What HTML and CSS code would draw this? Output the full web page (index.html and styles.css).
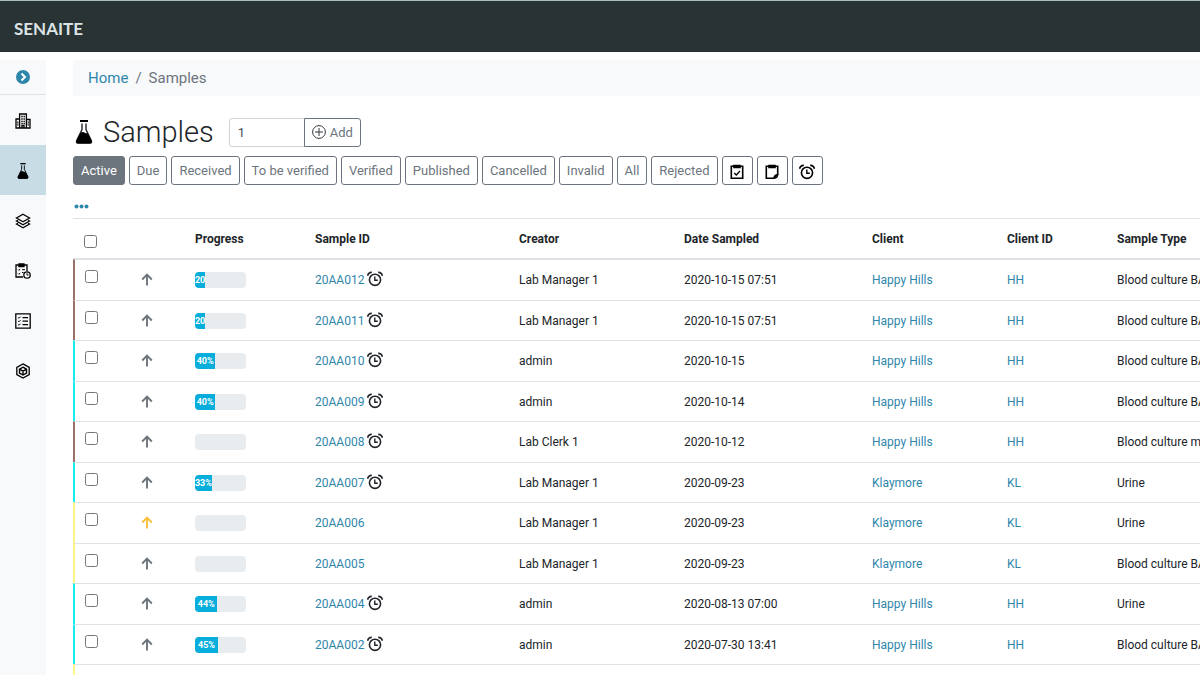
FILE: index.html
```html
<!DOCTYPE html>
<html lang="en">
<head>
    <meta charset="UTF-8">
    <meta name="viewport" content="width=device-width, initial-scale=1.0">
    <title>Samples - SENAITE</title>
    <link rel="stylesheet" href="styles.css">
</head>
<body>
    <svg class="sprite" aria-hidden="true">
        <symbol id="alarm" viewBox="0 0 16 16">
            <circle cx="8" cy="8.800" r="5.600" fill="none" stroke="currentColor" stroke-width="1.600"/>
            <path d="M7.800 5.600v3.600h3" fill="none" stroke="currentColor" stroke-width="1.400"/>
            <path d="M.8 4.800C.8 2.800 2.400 1.200 4.800 1.300M15.200 4.800C15.200 2.800 13.600 1.200 11.200 1.300" fill="none" stroke="currentColor" stroke-width="1.700"/>
        </symbol>
        <symbol id="flask" viewBox="0 0 18 24">
            <path d="M5 0h8v2H5z"/>
            <path d="M7 3.500V9.500L1.700 20.500Q.8 23 3 23h12q2.200 0 1.300-2.500L11 9.500V3.500" fill="none" stroke="currentColor" stroke-width="1.400"/>
            <path d="M5.300 13q2.700-1.600 4.200-.4t3 .4L17 21.500q0 2-2 2H3q-2 0-2-2z"/>
        </symbol>
        <symbol id="arrow" viewBox="0 0 12 13">
            <path d="M6 12.500V1.700M1.200 6.500L6 1.700l4.800 4.800" fill="none" stroke="currentColor" stroke-width="1.900"/>
        </symbol>
    </svg>

    <header class="navbar">
        <a class="brand" href="#">SENAITE</a>
    </header>

    <div class="layout">
        <nav class="sidebar">
            <button class="toggle" aria-label="Expand sidebar">
                <svg width="14" height="14" viewBox="0 0 14 14"><circle cx="7" cy="7" r="7" fill="#2f86ab"/><path d="M5.500 3.500L9 7l-3.500 3.500" fill="none" stroke="#fff" stroke-width="2"/></svg>
            </button>
            <a class="side-item" href="#" aria-label="Clients">
                <svg width="16" height="16" viewBox="0 0 16 16" fill="none" stroke="currentColor" stroke-width="1.300">
                    <path d="M4.600 15V1h6.800v14M4.600 6H1v9h14V6.500h-3.600M7 15v-2.500h2V15"/>
                    <path d="M6.300 3.500h3.600M6.300 6h3.600M6.300 8.500h3.600M6.300 10.700h3.600" stroke-dasharray="1.400 .8"/>
                    <path d="M2.800 8.500v4.500M13.200 8.500v4.500" stroke-dasharray="1.200 .8"/>
                </svg>
            </a>
            <a class="side-item active" href="#" aria-label="Samples"><svg width="12" height="16"><use href="#flask"/></svg></a>
            <a class="side-item" href="#" aria-label="Batches">
                <svg width="16" height="16" viewBox="0 0 16 16" fill="none" stroke="currentColor" stroke-width="1.300">
                    <path d="M8 1.300L14.500 5 8 8.700 1.500 5z"/>
                    <path d="M3 7.200L1.500 8 8 11.700 14.500 8 13 7.200M3 10.200l-1.500.8L8 14.700l6.500-3.700-1.500-.8"/>
                </svg>
            </a>
            <a class="side-item" href="#" aria-label="Worksheets">
                <svg width="16" height="16" viewBox="0 0 16 16" fill="none" stroke="currentColor" stroke-width="1.300">
                    <path d="M8 14H1V2h11v6"/>
                    <path d="M4 1h5v2.500H4z" fill="currentColor"/>
                    <path d="M3 6.500l.8.800L5.200 6M3 10.500l.8.800L5.200 10M7 6.700h3M7 9.500h1.500" stroke-width="1"/>
                    <circle cx="12" cy="12" r="3.200"/>
                    <path d="M12 10.300V12h1.500" stroke-width="1"/>
                </svg>
            </a>
            <a class="side-item" href="#" aria-label="Methods">
                <svg width="16" height="16" viewBox="0 0 16 16" fill="none" stroke="currentColor" stroke-width="1.300">
                    <path d="M.8.800h14.400v14.400H.8z"/>
                    <path d="M3.200 4.500l.8.800L5.500 3.700M3.200 8l.8.800 1.500-1.600M3.200 11.500l.8.800 1.500-1.600" stroke-width="1"/>
                    <path d="M7.500 4.700H13M7.500 8.200H13M7.500 11.700H13" stroke-width="1.200"/>
                </svg>
            </a>
            <a class="side-item" href="#" aria-label="Storage">
                <svg width="16" height="16" viewBox="0 0 16 16" fill="none" stroke="currentColor" stroke-width="1.300">
                    <path d="M8 .9l6.200 3.500v7.200L8 15.100l-6.200-3.500V4.400z"/>
                    <path d="M8 4.200l3.500 2v3.900L8 12l-3.500-1.900V6.200zM4.500 6.200L8 8.200l3.500-2M8 8.200V12" stroke-width="1.400"/>
                </svg>
            </a>
        </nav>

        <main class="content">
            <ol class="breadcrumb">
                <li><a href="#">Home</a></li>
                <li>Samples</li>
            </ol>

            <div class="heading">
                <svg class="heading-icon" width="18" height="24"><use href="#flask"/></svg>
                <h1>Samples</h1>
                <form class="add-form">
                    <input type="text" value="1" aria-label="Number of samples">
                    <button class="btn" type="button">
                        <svg width="14" height="14" viewBox="0 0 14 14" fill="none" stroke="#343a40"><circle cx="7" cy="7" r="6.400"/><path d="M7 3v8M3 7h8"/></svg>
                        Add
                    </button>
                </form>
            </div>

            <div class="filters">
                <button class="btn active">Active</button>
                <button class="btn">Due</button>
                <button class="btn">Received</button>
                <button class="btn">To be verified</button>
                <button class="btn">Verified</button>
                <button class="btn">Published</button>
                <button class="btn">Cancelled</button>
                <button class="btn">Invalid</button>
                <button class="btn">All</button>
                <button class="btn">Rejected</button>
                <button class="btn icon-btn" aria-label="Assigned">
                    <svg width="14" height="16" viewBox="0 0 14 16" fill="none" stroke="currentColor" stroke-width="1.600"><path d="M1.300 2.300h11.400v12H1.300z"/><path d="M4 1.500h6v2H4z" fill="currentColor"/><path d="M4.300 9l2 2 3.700-4" stroke-width="1.300"/></svg>
                </button>
                <button class="btn icon-btn" aria-label="Unassigned">
                    <svg width="14" height="16" viewBox="0 0 14 16" fill="none" stroke="currentColor" stroke-width="1.600"><path d="M8.500 14.300H1.300v-12h11.400v8z"/><path d="M4 1.500h6v2H4z" fill="currentColor"/><path d="M12.700 10.800q-3.200 0-3.700 3.500 3.400-.3 3.700-3.500z" stroke-width="1.400"/></svg>
                </button>
                <button class="btn icon-btn" aria-label="Late"><svg width="16" height="16"><use href="#alarm"/></svg></button>
            </div>

            <button class="more" aria-label="Toggle columns">
                <svg width="15" height="5" viewBox="0 0 15 5" fill="currentColor"><circle cx="2.500" cy="2.500" r="2"/><circle cx="7.500" cy="2.500" r="2"/><circle cx="12.500" cy="2.500" r="2"/></svg>
            </button>

            <table class="listing">
                <colgroup>
                    <col class="col-check"><col class="col-priority"><col class="col-progress"><col class="col-id"><col class="col-creator"><col class="col-date"><col class="col-client"><col class="col-clientid"><col>
                </colgroup>
                <thead>
                    <tr>
                        <th><input type="checkbox" aria-label="Select all"></th>
                        <th></th>
                        <th>Progress</th>
                        <th>Sample ID</th>
                        <th>Creator</th>
                        <th>Date Sampled</th>
                        <th>Client</th>
                        <th>Client ID</th>
                        <th>Sample Type</th>
                    </tr>
                </thead>
                <tbody>
                    <tr class="received">
                        <td><input type="checkbox" aria-label="Select 20AA012"></td>
                        <td><svg class="priority"><use href="#arrow"/></svg></td>
                        <td><div class="progress"><div class="bar" style="width: 20%">20</div></div></td>
                        <td><a href="#">20AA012</a> <svg class="late"><use href="#alarm"/></svg></td>
                        <td>Lab Manager 1</td>
                        <td>2020-10-15 07:51</td>
                        <td><a href="#">Happy Hills</a></td>
                        <td><a href="#">HH</a></td>
                        <td>Blood culture BA</td>
                    </tr>
                    <tr class="received">
                        <td><input type="checkbox" aria-label="Select 20AA011"></td>
                        <td><svg class="priority"><use href="#arrow"/></svg></td>
                        <td><div class="progress"><div class="bar" style="width: 20%">20</div></div></td>
                        <td><a href="#">20AA011</a> <svg class="late"><use href="#alarm"/></svg></td>
                        <td>Lab Manager 1</td>
                        <td>2020-10-15 07:51</td>
                        <td><a href="#">Happy Hills</a></td>
                        <td><a href="#">HH</a></td>
                        <td>Blood culture BA</td>
                    </tr>
                    <tr class="verified">
                        <td><input type="checkbox" aria-label="Select 20AA010"></td>
                        <td><svg class="priority"><use href="#arrow"/></svg></td>
                        <td><div class="progress"><div class="bar" style="width: 40%">40%</div></div></td>
                        <td><a href="#">20AA010</a> <svg class="late"><use href="#alarm"/></svg></td>
                        <td>admin</td>
                        <td>2020-10-15</td>
                        <td><a href="#">Happy Hills</a></td>
                        <td><a href="#">HH</a></td>
                        <td>Blood culture BA</td>
                    </tr>
                    <tr class="verified">
                        <td><input type="checkbox" aria-label="Select 20AA009"></td>
                        <td><svg class="priority"><use href="#arrow"/></svg></td>
                        <td><div class="progress"><div class="bar" style="width: 40%">40%</div></div></td>
                        <td><a href="#">20AA009</a> <svg class="late"><use href="#alarm"/></svg></td>
                        <td>admin</td>
                        <td>2020-10-14</td>
                        <td><a href="#">Happy Hills</a></td>
                        <td><a href="#">HH</a></td>
                        <td>Blood culture BA</td>
                    </tr>
                    <tr class="received">
                        <td><input type="checkbox" aria-label="Select 20AA008"></td>
                        <td><svg class="priority"><use href="#arrow"/></svg></td>
                        <td><div class="progress"></div></td>
                        <td><a href="#">20AA008</a> <svg class="late"><use href="#alarm"/></svg></td>
                        <td>Lab Clerk 1</td>
                        <td>2020-10-12</td>
                        <td><a href="#">Happy Hills</a></td>
                        <td><a href="#">HH</a></td>
                        <td>Blood culture m</td>
                    </tr>
                    <tr class="verified">
                        <td><input type="checkbox" aria-label="Select 20AA007"></td>
                        <td><svg class="priority"><use href="#arrow"/></svg></td>
                        <td><div class="progress"><div class="bar" style="width: 33%">33%</div></div></td>
                        <td><a href="#">20AA007</a> <svg class="late"><use href="#alarm"/></svg></td>
                        <td>Lab Manager 1</td>
                        <td>2020-09-23</td>
                        <td><a href="#">Klaymore</a></td>
                        <td><a href="#">KL</a></td>
                        <td>Urine</td>
                    </tr>
                    <tr class="due">
                        <td><input type="checkbox" aria-label="Select 20AA006"></td>
                        <td><svg class="priority high"><use href="#arrow"/></svg></td>
                        <td><div class="progress"></div></td>
                        <td><a href="#">20AA006</a></td>
                        <td>Lab Manager 1</td>
                        <td>2020-09-23</td>
                        <td><a href="#">Klaymore</a></td>
                        <td><a href="#">KL</a></td>
                        <td>Urine</td>
                    </tr>
                    <tr class="due">
                        <td><input type="checkbox" aria-label="Select 20AA005"></td>
                        <td><svg class="priority"><use href="#arrow"/></svg></td>
                        <td><div class="progress"></div></td>
                        <td><a href="#">20AA005</a></td>
                        <td>Lab Manager 1</td>
                        <td>2020-09-23</td>
                        <td><a href="#">Klaymore</a></td>
                        <td><a href="#">KL</a></td>
                        <td>Blood culture BA</td>
                    </tr>
                    <tr class="verified">
                        <td><input type="checkbox" aria-label="Select 20AA004"></td>
                        <td><svg class="priority"><use href="#arrow"/></svg></td>
                        <td><div class="progress"><div class="bar" style="width: 44%">44%</div></div></td>
                        <td><a href="#">20AA004</a> <svg class="late"><use href="#alarm"/></svg></td>
                        <td>admin</td>
                        <td>2020-08-13 07:00</td>
                        <td><a href="#">Happy Hills</a></td>
                        <td><a href="#">HH</a></td>
                        <td>Urine</td>
                    </tr>
                    <tr class="verified">
                        <td><input type="checkbox" aria-label="Select 20AA002"></td>
                        <td><svg class="priority"><use href="#arrow"/></svg></td>
                        <td><div class="progress"><div class="bar" style="width: 45%">45%</div></div></td>
                        <td><a href="#">20AA002</a> <svg class="late"><use href="#alarm"/></svg></td>
                        <td>admin</td>
                        <td>2020-07-30 13:41</td>
                        <td><a href="#">Happy Hills</a></td>
                        <td><a href="#">HH</a></td>
                        <td>Blood culture BA</td>
                    </tr>
                    <tr class="due">
                        <td colspan="9"></td>
                    </tr>
                </tbody>
            </table>
        </main>
    </div>
</body>
</html>
```
FILE: styles.css
```css
* {
    box-sizing: border-box;
}
body {
    display: flex;
    flex-direction: column;
    height: 100vh;
    margin: 0;
    overflow: hidden;
    font-family: Roboto, sans-serif;
    font-size: 12px;
    line-height: 20px;
    color: #212529;
    background-color: #fff;
}
a {
    color: #2f86ab;
    text-decoration: none;
}
button {
    font-family: inherit;
    cursor: pointer;
}
.sprite {
    position: absolute;
    width: 0;
    height: 0;
}
.navbar {
    display: flex;
    align-items: center;
    flex-shrink: 0;
    height: 52px;
    padding: 5px 14px 0;
    background-color: #293333;
    border-top: 1px solid #a9bcbc;
}
.brand {
    font-family: Lato, sans-serif;
    font-size: 17px;
    font-weight: bold;
    color: #dce3e6;
}
.layout {
    display: flex;
    flex: 1;
    min-height: 0;
    padding-top: 8px;
}
.sidebar {
    flex: 0 0 46px;
    background-color: #f8f9fb;
}
.toggle {
    display: flex;
    align-items: center;
    justify-content: center;
    width: 100%;
    height: 35px;
    padding: 0;
    background: none;
    border: none;
    border-bottom: 1px solid #dee2e6;
}
.side-item {
    display: flex;
    align-items: center;
    justify-content: center;
    height: 50px;
    padding-top: 2px;
    color: #000;
}
.side-item.active {
    background-color: #c7dce4;
}
.content {
    flex: 1;
    min-width: 0;
    padding-left: 27px;
}
.breadcrumb {
    display: flex;
    margin: 0;
    padding: 6px 15px;
    list-style: none;
    font-size: 15px;
    line-height: 24px;
    color: #6c757d;
    background-color: #f8f9fb;
}
.breadcrumb li + li::before {
    content: "/";
    padding: 0 7px;
}
.heading {
    display: flex;
    align-items: center;
    height: 36px;
    margin-top: 18px;
}
.heading-icon {
    margin: 0 10px 0 2px;
}
.heading h1 {
    margin: 0;
    font-size: 29px;
    font-weight: 300;
    line-height: 36px;
}
.add-form {
    display: flex;
    margin-left: 15px;
}
.add-form input {
    width: 76px;
    height: 29px;
    padding: 0 8px;
    font-family: inherit;
    font-size: 13px;
    color: #495057;
    border: 1px solid #ced4da;
    border-radius: 3px 0 0 3px;
}
.add-form .btn {
    margin-left: -1px;
    border-radius: 0 3px 3px 0;
}
.btn {
    display: flex;
    align-items: center;
    gap: 4px;
    height: 29px;
    padding: 0 7px;
    font-size: 13px;
    color: #6c757d;
    background-color: #fff;
    border: 1px solid #6c757d;
    border-radius: 3px;
}
.btn.active {
    color: #fff;
    background-color: #6c757d;
}
.icon-btn {
    justify-content: center;
    width: 31px;
    padding: 2px 0 0;
    color: #000;
}
.filters {
    display: flex;
    gap: 4px;
    margin-top: 6px;
}
.more {
    display: block;
    height: 33px;
    padding: 0 0 0 1px;
    line-height: 1;
    color: #2f86ab;
    background: none;
    border: none;
}
.more svg {
    margin-top: 12px;
}
.listing {
    width: 100%;
    table-layout: fixed;
    border-spacing: 0;
}
.col-check {
    width: 58px;
}
.col-priority {
    width: 54px;
}
.col-progress {
    width: 120px;
}
.col-id {
    width: 204px;
}
.col-creator {
    width: 165px;
}
.col-date {
    width: 188px;
}
.col-client {
    width: 135px;
}
.col-clientid {
    width: 110px;
}
.listing th,
.listing td {
    height: 40px;
    padding: 10px 0 9px 10px;
    text-align: left;
    vertical-align: top;
    white-space: nowrap;
    border-top: 1px solid #dee2e6;
}
.listing th {
    height: 41px;
    border-bottom: 1px solid #dee2e6;
}
.listing tr:nth-child(odd) td {
    height: 41px;
}
.listing td:first-child {
    border-left: 2px solid transparent;
}
.listing .received td:first-child {
    border-left-color: #9b7069;
}
.listing .verified td:first-child {
    border-left-color: #18ecec;
}
.listing .due td:first-child {
    border-left-color: #fff586;
}
.listing input {
    display: block;
    width: 13px;
    height: 13px;
    margin: 0;
}
.listing th input {
    margin: 6px 1px 0;
}
.priority {
    display: block;
    width: 12px;
    height: 13px;
    margin-top: 3px;
    color: #6c757d;
}
.priority.high {
    color: #fcbf3c;
}
.late {
    width: 16px;
    height: 16px;
    margin-top: -3px;
    vertical-align: middle;
}
.progress {
    width: 51px;
    height: 16px;
    margin-top: 2px;
    overflow: hidden;
    background-color: #e9ecef;
    border-radius: 4px;
}
.bar {
    display: flex;
    align-items: center;
    justify-content: center;
    height: 16px;
    font-size: 9px;
    font-weight: bold;
    color: #fff;
    background-color: #08aedb;
}
```
